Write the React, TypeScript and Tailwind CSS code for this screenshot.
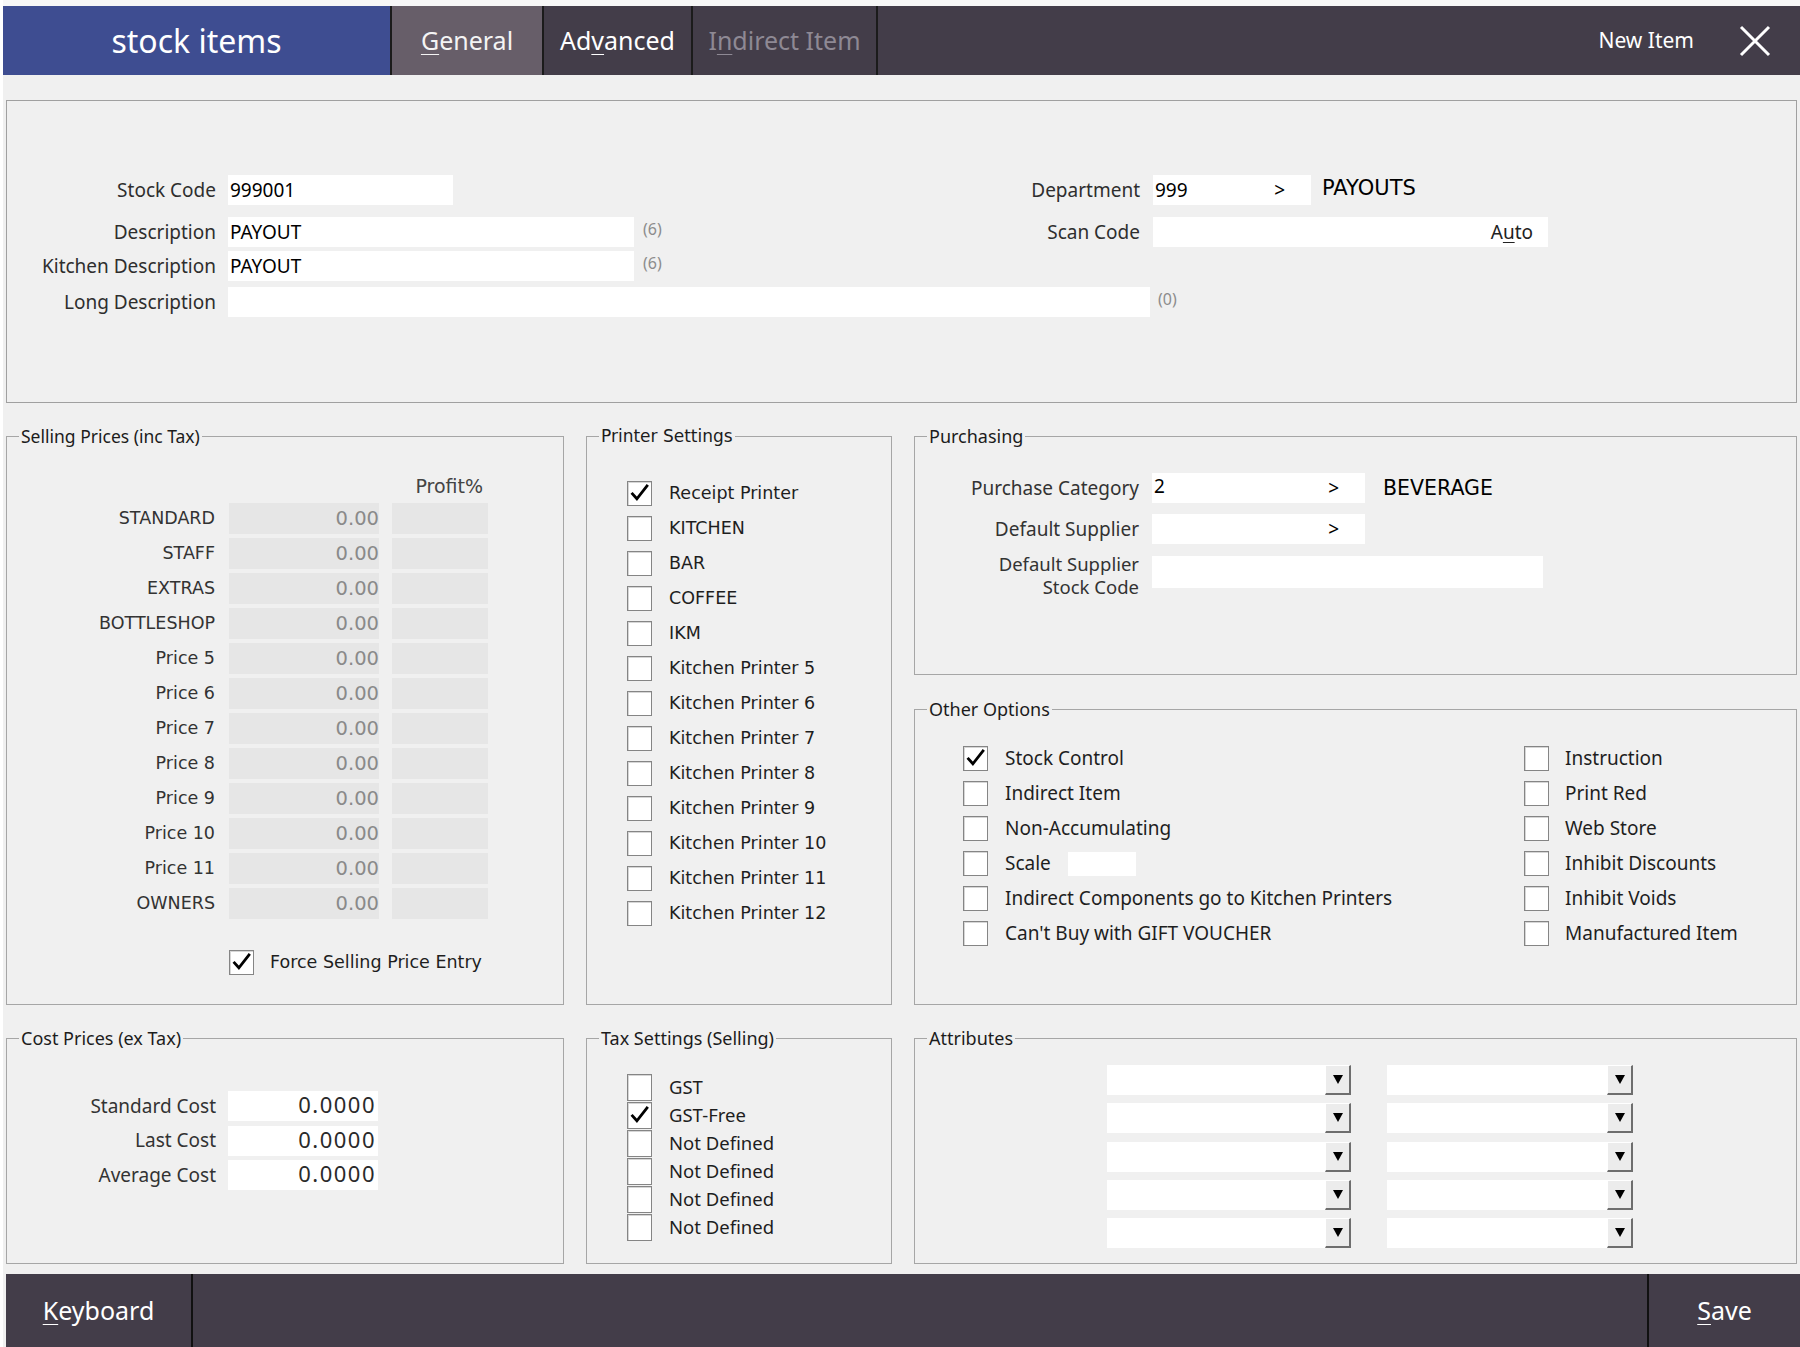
import React from "react";

const NOTO = "font-['Noto_Sans',sans-serif]";
const DJV = "font-['DejaVu_Sans',sans-serif]";

function Check({ checked = false, size = "w-[25px] h-[25px]" }: { checked?: boolean; size?: string }) {
  return (
    <span className={`${size} shrink-0 bg-white border border-[#858585] shadow-[inset_1px_1px_0_#d6d6d6] flex items-center justify-center`}>
      {checked && (
        <svg viewBox="0 0 24 24" className="w-[21px] h-[21px]">
          <path d="M4 12.5l5 5.5L20.5 3.5" fill="none" stroke="#000" strokeWidth="3.2" strokeLinecap="square" />
        </svg>
      )}
    </span>
  );
}

function Group({ title, font, className = "", children }: { title: string; font: string; className?: string; children?: React.ReactNode }) {
  return (
    <fieldset className={`border border-[#a6a6a6] min-w-0 ${className}`}>
      <legend className={`ml-[12px] px-[2px] leading-[24px] text-[#1c1c1c] ${font}`}>{title}</legend>
      {children}
    </fieldset>
  );
}

function Box({ w, children, className = "" }: { w: string; children?: React.ReactNode; className?: string }) {
  return <div className={`${w} h-[30px] bg-white flex items-center pl-[2px] text-black shrink-0 ${className}`}>{children}</div>;
}

function Combo() {
  return (
    <div className="h-[30px] bg-white flex justify-end">
      <div className="w-[26px] h-[30px] bg-[#ececec] border-t border-l border-r-2 border-b-2 border-t-white border-l-white border-r-[#6e6e6e] border-b-[#6e6e6e] flex items-center justify-center">
        <svg width="10" height="9" viewBox="0 0 10 9">
          <path d="M0 0h10L5 9z" fill="#000" />
        </svg>
      </div>
    </div>
  );
}

const sellRows = ["STANDARD", "STAFF", "EXTRAS", "BOTTLESHOP", "Price 5", "Price 6", "Price 7", "Price 8", "Price 9", "Price 10", "Price 11", "OWNERS"];
const printers = ["Receipt Printer", "KITCHEN", "BAR", "COFFEE", "IKM", "Kitchen Printer 5", "Kitchen Printer 6", "Kitchen Printer 7", "Kitchen Printer 8", "Kitchen Printer 9", "Kitchen Printer 10", "Kitchen Printer 11", "Kitchen Printer 12"];
const optsLeft = ["Stock Control", "Indirect Item", "Non-Accumulating", "Scale", "Indirect Components go to Kitchen Printers", "Can't Buy with GIFT VOUCHER"];
const optsRight = ["Instruction", "Print Red", "Web Store", "Inhibit Discounts", "Inhibit Voids", "Manufactured Item"];
const taxes = ["GST", "GST-Free", "Not Defined", "Not Defined", "Not Defined", "Not Defined"];

export default function App() {
  return (
    <div className={`w-[1800px] h-[1347px] bg-[#f0f0f0] flex overflow-hidden ${NOTO}`}>
      <div className="w-[3px] bg-white" />
      <div className="flex-1 flex flex-col">
        {/* top strip */}
        <div className="h-[6px] bg-[#f7f7f7]" />

        {/* header */}
        <div className="h-[69px] flex bg-[#433d49] text-white">
          <div className="w-[387px] bg-[#3e4d91] flex items-center justify-center text-[32px]">stock items</div>
          <div className="w-[152px] bg-[#675e69] border-l-2 border-[#1b1b1b] flex items-center justify-center text-[25px] text-[#f4f4f4]">
            <span><span className="underline underline-offset-[4px] decoration-1">G</span>eneral</span>
          </div>
          <div className="w-[149px] border-l-2 border-[#1b1b1b] flex items-center justify-center text-[25px]">
            <span>Ad<span className="underline underline-offset-[4px] decoration-1">v</span>anced</span>
          </div>
          <div className="w-[187px] border-l-2 border-r-2 border-[#1b1b1b] flex items-center justify-center text-[25px] text-[#8e8994]">
            <span>I<span className="underline underline-offset-[4px] decoration-1">n</span>direct Item</span>
          </div>
          <div className="flex-1 flex items-center justify-end">
            <span className="text-[21px] mr-[44px]">New Item</span>
            <svg width="34" height="34" viewBox="0 0 34 34" className="mr-[28px]">
              <path d="M3 3L31 31M31 3L3 31" stroke="#fff" strokeWidth="3" />
            </svg>
          </div>
        </div>

        <div className="h-[25px]" />

        {/* content */}
        <div className="mx-[3px] flex flex-col">
          {/* top box */}
          <div className="h-[303px] border border-[#a0a0a0] pt-[74px] text-[19px] text-[#2e2e2e]">
            <div className="flex">
              <div className="w-[680px] flex flex-col">
                <div className="flex items-center h-[30px]">
                  <span className="w-[209px] text-right">Stock Code</span>
                  <Box w="w-[225px] ml-[12px]">999001</Box>
                </div>
                <div className="flex items-center h-[30px] mt-[12px]">
                  <span className="w-[209px] text-right">Description</span>
                  <Box w="w-[406px] ml-[12px]">PAYOUT</Box>
                  <span className="ml-[9px] text-[16px] text-[#8c8c8c] -mt-[6px]">(6)</span>
                </div>
                <div className="flex items-center h-[30px] mt-[4px]">
                  <span className="w-[209px] text-right">Kitchen Description</span>
                  <Box w="w-[406px] ml-[12px]">PAYOUT</Box>
                  <span className="ml-[9px] text-[16px] text-[#8c8c8c] -mt-[6px]">(6)</span>
                </div>
              </div>
              <div className="flex flex-col">
                <div className="flex items-center h-[30px]">
                  <span className="w-[453px] text-right">Department</span>
                  <Box w="w-[158px] ml-[13px] justify-between pr-[26px]">
                    <span>999</span>
                    <span>&gt;</span>
                  </Box>
                  <span className={`ml-[11px] text-[21px] text-black -mt-[3px] ${DJV}`}>PAYOUTS</span>
                </div>
                <div className="flex items-center h-[30px] mt-[12px]">
                  <span className="w-[453px] text-right">Scan Code</span>
                  <Box w="w-[395px] ml-[13px] justify-end pr-[15px]">
                    <span className="text-[#222]">A<span className="underline underline-offset-[3px] decoration-1">u</span>to</span>
                  </Box>
                </div>
              </div>
            </div>
            <div className="flex items-center h-[30px] mt-[6px]">
              <span className="w-[209px] text-right">Long Description</span>
              <Box w="w-[922px] ml-[12px]" />
              <span className="ml-[8px] text-[16px] text-[#8c8c8c] -mt-[6px]">(0)</span>
            </div>
          </div>

          {/* groups */}
          <div className="mt-[21px] flex gap-x-[22px]">
            {/* column 1 */}
            <div className="w-[558px] flex flex-col gap-y-[21px]">
              <Group title="Selling Prices (inc Tax)" font={`${NOTO} text-[17.5px]`} className="h-[581px]">
                <div className={`flex flex-col text-[17.5px] text-[#333] ${DJV}`}>
                  <div className="w-[476px] text-right leading-[24px] mt-[26px] text-[19px] text-[#444]">Profit%</div>
                  <div className="flex flex-col gap-y-[4px] mt-[5px]">
                    {sellRows.map((r) => (
                      <div key={r} className="flex items-center h-[31px]">
                        <span className="w-[208px] text-right">{r}</span>
                        <div className="ml-[14px] w-[150px] h-[31px] bg-[#e6e6e6] flex items-center justify-end text-[19.5px] text-[#8a8a8a]">0.00</div>
                        <div className="ml-[13px] w-[96px] h-[31px] bg-[#e6e6e6]" />
                      </div>
                    ))}
                  </div>
                  <div className="flex items-center mt-[30px] pl-[222px]">
                    <Check checked />
                    <span className="ml-[16px] text-[#1e1e1e]">Force Selling Price Entry</span>
                  </div>
                </div>
              </Group>
              <Group title="Cost Prices (ex Tax)" font={`${NOTO} text-[18px]`} className="h-[238px]">
                <div className="flex flex-col gap-y-[4.5px] mt-[41px] text-[19px] text-[#333]">
                  {["Standard Cost", "Last Cost", "Average Cost"].map((l) => (
                    <div key={l} className="flex items-center h-[30px]">
                      <span className="w-[209px] text-right">{l}</span>
                      <Box w="w-[150px] ml-[12px] justify-end pr-[2px]">
                        <span className="text-[22px] tracking-[1.5px] text-[#2a2a2a] -mt-[3px]">0.0000</span>
                      </Box>
                    </div>
                  ))}
                </div>
              </Group>
            </div>

            {/* column 2 */}
            <div className="w-[306px] flex flex-col gap-y-[21px]">
              <Group title="Printer Settings" font={`${DJV} text-[17px]`} className="h-[581px]">
                <div className={`flex flex-col mt-[28px] pl-[40px] text-[17.5px] text-[#1e1e1e] ${DJV}`}>
                  {printers.map((p, i) => (
                    <div key={p} className="flex items-center h-[35px]">
                      <Check checked={i === 0} />
                      <span className="ml-[17px]">{p}</span>
                    </div>
                  ))}
                </div>
              </Group>
              <Group title="Tax Settings (Selling)" font={`${NOTO} text-[18px]`} className="h-[238px]">
                <div className="flex flex-col mt-[23px] pl-[40px] text-[18.5px] text-[#1e1e1e]">
                  {taxes.map((t, i) => (
                    <div key={i} className="flex items-center h-[28px]">
                      <Check checked={i === 1} size="w-[25px] h-[27px]" />
                      <span className="ml-[17px]">{t}</span>
                    </div>
                  ))}
                </div>
              </Group>
            </div>

            {/* column 3 */}
            <div className="w-[883px] flex flex-col">
              <Group title="Purchasing" font={`${NOTO} text-[18px]`} className="h-[251px]">
                <div className="flex flex-col text-[19px] text-[#333]">
                  <div className="flex items-center h-[30px] mt-[25px]">
                    <span className="w-[224px] text-right">Purchase Category</span>
                    <Box w="w-[213px] ml-[13px] justify-between pr-[26px]">
                      <span className="-mt-[4px]">2</span>
                      <span>&gt;</span>
                    </Box>
                    <span className={`ml-[18px] text-[20.5px] text-black ${DJV}`}>BEVERAGE</span>
                  </div>
                  <div className="flex items-center h-[30px] mt-[11px]">
                    <span className="w-[224px] text-right">Default Supplier</span>
                    <Box w="w-[213px] ml-[13px] justify-end pr-[26px]">
                      <span>&gt;</span>
                    </Box>
                  </div>
                  <div className="flex items-start mt-[8px]">
                    <div className="w-[224px] flex flex-col items-end text-[18.5px] leading-[23px]">
                      <span>Default Supplier</span>
                      <span>Stock Code</span>
                    </div>
                    <div className="w-[391px] h-[32px] ml-[13px] mt-[4px] bg-white" />
                  </div>
                </div>
              </Group>
              <Group title="Other Options" font={`${NOTO} text-[18px]`} className="h-[308px] mt-[22px]">
                <div className="grid grid-cols-[561px_1fr] mt-[20px] pl-[48px] text-[19px] text-[#1e1e1e]">
                  <div className="flex flex-col">
                    {optsLeft.map((o, i) => (
                      <div key={o} className="flex items-center h-[35px]">
                        <Check checked={i === 0} />
                        <span className="ml-[17px]">{o}</span>
                        {o === "Scale" && <div className="ml-[17px] w-[68px] h-[24px] bg-white" />}
                      </div>
                    ))}
                  </div>
                  <div className="flex flex-col">
                    {optsRight.map((o) => (
                      <div key={o} className="flex items-center h-[35px]">
                        <Check />
                        <span className="ml-[16px]">{o}</span>
                      </div>
                    ))}
                  </div>
                </div>
              </Group>
              <Group title="Attributes" font={`${NOTO} text-[18px]`} className="h-[238px] mt-[21px]">
                <div className="grid grid-cols-[244px_246px] gap-x-[36px] gap-y-[8.3px] mt-[15px] pl-[192px]">
                  {Array.from({ length: 10 }).map((_, i) => (
                    <Combo key={i} />
                  ))}
                </div>
              </Group>
            </div>
          </div>
        </div>

        <div className="h-[10px]" />

        {/* footer */}
        <div className="ml-[3px] h-[73px] bg-[#433d49] flex justify-between text-white text-[25px]">
          <div className="w-[187px] border-r-2 border-[#111] flex items-center justify-center">
            <span><span className="underline underline-offset-[4px] decoration-1">K</span>eyboard</span>
          </div>
          <div className="w-[153px] border-l-2 border-[#111] flex items-center justify-center">
            <span><span className="underline underline-offset-[4px] decoration-1">S</span>ave</span>
          </div>
        </div>
      </div>
    </div>
  );
}
